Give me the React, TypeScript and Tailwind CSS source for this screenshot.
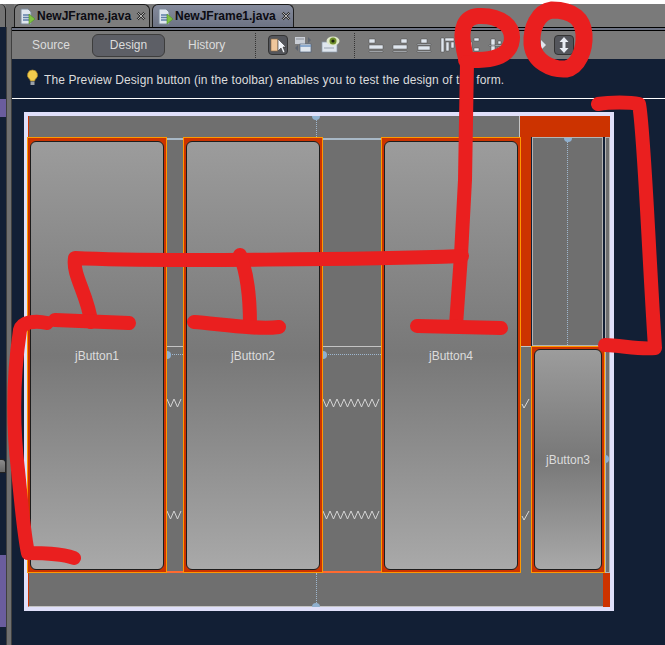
const font = "font-['Liberation_Sans',Arial,sans-serif]"

function FileIcon() {
  return (
    <svg width="17" height="17" viewBox="0 0 17 17" className="shrink-0">
      <path d="M2 1h7l3 3v12H2z" fill="#dfe6ee" stroke="#7c8a9a" />
      <path d="M4 7h6M4 9.5h6M4 12h6" stroke="#5f7fa8" strokeWidth="1.4" />
      <path d="M10 6l6 5-6 5z" fill="#7fc241" stroke="#4f8f26" strokeWidth="0.6" />
    </svg>
  )
}

function CloseIcon() {
  return (
    <svg width="10" height="10" viewBox="0 0 10 10" className="shrink-0">
      <path d="M1.5 1.5l7 7M8.5 1.5l-7 7" stroke="#2b2b2b" strokeWidth="2.4" />
      <path d="M1.5 1.5l7 7M8.5 1.5l-7 7" stroke="#b5b5b5" strokeWidth="1" />
    </svg>
  )
}

function Tab({ name, active }: { name: string; active?: boolean }) {
  return (
    <div
      className={`flex h-[23px] items-center gap-px rounded-t-md border border-b-0 border-[#1c1c1c] pl-[4px] pr-[3px] ${
        active ? "w-[142px] bg-gradient-to-b from-[#858b9c] to-[#6d7384]" : "w-[136px] bg-[#7d7d7d]"
      }`}
    >
      <FileIcon />
      <span className="text-[12px] font-bold text-[#0b0b12]">{name}</span>
      <span className="ml-[4px]"><CloseIcon /></span>
    </div>
  )
}

function Dotted() {
  return <div className="mx-0 h-[25px] border-l border-dotted border-[#333]" />
}

function AlignIcon({ d }: { d: string }) {
  return (
    <svg width="16" height="16" viewBox="0 0 16 16" className="shrink-0">
      <path d={d} fill="#dfe6ee" stroke="#4c4c4c" strokeWidth="0.5" />
    </svg>
  )
}

function Toolbar() {
  return (
    <div className="flex h-[28px] items-center bg-[#7a7a7a] text-[12px] text-[#dcdcdc]">
      <span className="ml-[20px] w-[60px]">Source</span>
      <div className="flex h-[23px] w-[73px] items-center justify-center rounded-md border border-[#3d3d3d] bg-[#5d5f66]">Design</div>
      <span className="ml-[23px] w-[67px]">History</span>
      <Dotted />
      <div className="ml-[12px] flex h-[20px] w-[20px] items-center justify-center rounded-[4px] border border-[#333] bg-[#54565c]">
        <svg width="16" height="17" viewBox="0 0 16 17">
          <rect x="1" y="2" width="7" height="12" fill="#efc79c" stroke="#8a6a44" strokeWidth="0.6" />
          <path d="M8 2l0 12 3-3 2 5 2-1-2-5h3z" fill="#f2f5fa" stroke="#333" strokeWidth="0.6" />
        </svg>
      </div>
      <svg width="18" height="18" viewBox="0 0 18 18" className="ml-[6px]">
        <rect x="1" y="1" width="10" height="7" fill="#c9ced6" />
        <path d="M2 3h8" stroke="#8a8f98" />
        <rect x="6" y="8" width="11" height="8" fill="#dfe6ee" stroke="#50637c" strokeWidth="0.7" />
        <path d="M6 10h11" stroke="#6f94c2" strokeWidth="1.5" />
        <path d="M1 12l3-3v6zM17 4l-3-3v6z" fill="#5d6470" />
      </svg>
      <svg width="20" height="18" viewBox="0 0 20 18" className="ml-[9px]">
        <rect x="1" y="6" width="15" height="10" fill="#dfe6ee" stroke="#8a98a8" strokeWidth="0.7" />
        <path d="M3 12h10" stroke="#9aa5b2" />
        <ellipse cx="12" cy="5" rx="6.5" ry="4.5" fill="#dfe8c8" />
        <circle cx="12" cy="5" r="3.5" fill="#6f8f2a" />
        <circle cx="12" cy="5" r="1.6" fill="#1d2410" />
      </svg>
      <div className="ml-[13px]"><Dotted /></div>
      <div className="ml-[13px] flex items-center gap-[8px]">
        <AlignIcon d="M1 2h6v4H1zM1 8h14v4H1zM1 14h14v1H1z" />
        <AlignIcon d="M9 2h6v4H9zM1 8h14v4H1zM1 14h14v1H1z" />
        <AlignIcon d="M5 2h6v4H5zM1 7h14v1H1zM2 9h12v4H2zM1 14h14v1H1z" />
        <AlignIcon d="M1 1h3v14H1zM5 1h9v3H5zM6 5h3v9H6zM11 5h3v6h-3z" />
        <AlignIcon d="M10 1h5v3h-5zM10 11h5v3h-5zM2 5h6v6H2z" />
        <AlignIcon d="M1 8h14v1H1zM3 2h4v13H3zM10 4h3v3h-3zM10 10h3v3h-3z" />
      </div>
      <div className="ml-[37px] h-0 w-0 border-y-[5px] border-l-[5px] border-y-transparent border-l-[#dfe6ee]" />
      <div className="ml-[8px] flex h-[20px] w-[20px] items-center justify-center rounded-[4px] border border-[#333] bg-[#54565c]">
        <svg width="12" height="16" viewBox="0 0 12 16">
          <path d="M6 0l4.500 5H7.500v6h3L6 16l-4.500-5h3V5h-3z" fill="#e8edf4" />
        </svg>
      </div>
    </div>
  )
}

function JButton({ label, className }: { label: string; className: string }) {
  return (
    <div className={`border border-[#ff9900] bg-[#cc3300] p-[2px] ${className}`}>
      <div className="flex h-full w-full items-center justify-center rounded-[6px] border border-[#1d1d1d] bg-gradient-to-b from-[#9c9c9c] via-[#787878] to-[#a9a9a9] text-[12px] text-[#dcdcdc]">
        {label}
      </div>
    </div>
  )
}

function Zigzag({ count }: { count: number }) {
  const points = Array.from({ length: count * 2 + 1 }, (_, i) => `${i * 3.5},${i % 2 === 0 ? 1 : 9}`).join(" ")
  return (
    <svg height="10" className="w-full shrink-0 overflow-hidden">
      <polyline points={points} fill="none" stroke="#d4d4d4" strokeWidth="1" />
    </svg>
  )
}

function Check() {
  return (
    <svg width="9" height="10" viewBox="0 0 9 10" className="shrink-0">
      <path d="M1 5l2 4 5-9" fill="none" stroke="#d8d8d8" />
    </svg>
  )
}

function Gap({ width, zigs }: { width: string; zigs: number }) {
  return (
    <div className={`relative flex shrink-0 flex-col ${width} bg-[#6f6f6f]`}>
      <div className="mt-px h-[2px] shrink-0 bg-[#a8b8c6]" />
      <div className="h-[207px] shrink-0 border-b border-[#c4c4c4]" />
      <div className="mt-[7px] shrink-0 border-t border-dotted border-[#9fb8d0]" />
      <div className="absolute left-0 top-[214px] h-[8px] w-[4px] rounded-r-full bg-[#8fb0cf]" />
      <div className="mt-[43px]"><Zigzag count={zigs} /></div>
      <div className="mt-[102px]"><Zigzag count={zigs} /></div>
      <div className="mt-auto h-[2px] shrink-0 bg-[#ff6a30]" />
    </div>
  )
}

function Form() {
  return (
    <div className="ml-[12px] mt-[13px] h-[499px] w-[590px] border-4 border-[#e0e0fa]">
      <div className="relative flex h-[21px]">
        <div className="flex-1 border-l border-[#cc3300] bg-[#6f6f6f]" />
        <div className="w-[91px] border-l border-[#c4c4c4] bg-[#cc3300]" />
        <div className="absolute left-[288px] top-0 h-full border-l border-dotted border-[#9fb8d0]" />
        <div className="absolute left-[284px] top-0 h-[4px] w-[8px] rounded-b-full bg-[#8fb0cf]" />
      </div>

      <div className="relative -ml-px flex h-[436px]">
        <JButton label="jButton1" className="h-full w-[140px] shrink-0 pt-[3px]" />
        <Gap width="w-[16px]" zigs={2} />
        <JButton label="jButton2" className="h-full w-[140px] shrink-0 pt-[3px]" />
        <Gap width="w-[58px]" zigs={8} />
        <JButton label="jButton4" className="h-full w-[140px] shrink-0 pt-[3px]" />
        <div className="flex w-[10px] shrink-0 flex-col">
          <div className="h-[210px] shrink-0 border-b border-[#c4c4c4] bg-[#cc3300]" />
          <div className="flex flex-1 flex-col items-center bg-[#6f6f6f]">
            <div className="mt-[52px] -translate-x-px"><Check /></div>
            <div className="mt-[102px] -translate-x-px"><Check /></div>
          </div>
        </div>
        <div className="flex w-[74px] shrink-0 flex-col">
          <div className="relative ml-px mr-[2px] flex h-[209px] shrink-0 justify-center border border-[#b4b4b4] bg-[#6f6f6f]">
            <div className="h-full border-l border-dotted border-[#9fb8d0]" />
            <div className="absolute left-[31px] top-0 h-[4px] w-[8px] rounded-b-full bg-[#8fb0cf]" />
          </div>
          <JButton label="jButton3" className="min-h-0 flex-1" />
        </div>
        <div className="relative w-[5px] shrink-0 border border-[#b4b4b4] bg-[#6f6f6f]">
          <div className="absolute -left-px top-[317px] h-[8px] w-[4px] rounded-r-full bg-[#8fb0cf]" />
        </div>
      </div>

      <div className="relative flex h-[34px]">
        <div className="flex-1 border-b border-l border-b-[#c4c4c4] border-l-[#cc3300] bg-[#6f6f6f]" />
        <div className="w-[7px] bg-[#cc3300]" />
        <div className="absolute left-[288px] top-0 h-full border-l border-dotted border-[#9fb8d0]" />
        <div className="absolute bottom-0 left-[284px] h-[4px] w-[8px] rounded-t-full bg-[#8fb0cf]" />
      </div>
    </div>
  )
}

function LeftStrip() {
  return (
    <div className="flex w-[12px] shrink-0">
      <div className="flex w-[6px] flex-col">
        <div className="h-[72px]" />
        <div className="h-[18px] bg-[#6a5d9e]" />
        <div className="h-[342px]" />
        <div className="h-[14px] rounded-tr-sm border-y border-r border-[#222] bg-gradient-to-b from-[#8c8c8c] to-[#666]" />
        <div className="h-[82px]" />
        <div className="h-[72px] bg-[#6a5d9e]" />
      </div>
      <div className="w-[6px] border-x border-[#3f3f3f] bg-[#6f6f6f]" />
    </div>
  )
}

function Scribbles() {
  return (
    <svg width="665" height="645" className="pointer-events-none absolute left-0 top-0" fill="none" stroke="#ea1f1f" strokeWidth="14" strokeLinecap="round" strokeLinejoin="round">
      <path strokeWidth="16" d="M466 60C478 60 505 62 511 44C516 26 500 15 478 16C464 17 461 30 463 42C464 52 466 58 467 62" />
      <path d="M467 62L465 180L461 255L456 325" />
      <path strokeWidth="17" d="M552 10C538 12 531 28 532 44C534 62 552 70 566 69C578 67 585 50 584 34C583 20 574 10 552 10Z" />
      <path d="M462 256C380 259 150 262 75 258C72 275 88 295 91 322" />
      <path d="M240 255C248 275 250 300 250 325" />
      <path d="M55 320L129 323M194 322C220 324 255 330 279 327M417 326L501 328" />
      <path d="M47 323C35 320 22 322 20 330C14 370 12 420 18 470C22 510 24 535 28 553C42 553 60 553 74 558" />
      <path d="M598 104C610 102 630 102 639 104C644 130 648 240 655 348C640 350 620 345 605 345" />
    </svg>
  )
}

export default function App() {
  return (
    <div className={`relative flex h-[645px] w-[665px] flex-col overflow-hidden bg-[#121f35] ${font}`}>
      <div className="h-[4px] shrink-0 bg-white" />
      <div className="flex h-[23px] shrink-0 items-end bg-[#7a7a7a]">
        <div className="h-[23px] w-[6px] rounded-tr-md border-r border-[#1c1c1c] bg-[#747474]" />
        <div className="h-[23px] w-[8px] bg-[#6f6f6f]" />
        <Tab name="NewJFrame.java" />
        <div className="w-[2px]" />
        <Tab name="NewJFrame1.java" active />
      </div>
      <div className="flex min-h-0 flex-1">
        <LeftStrip />
        <div className="min-w-0 flex-1">
          <div className="h-[4px] border-y border-black bg-[#6d7384]" />
          <Toolbar />
          <div className="flex h-[40px] items-center border-b border-white pl-[13px] pt-[2px] text-[12px] tracking-[0.1px] text-[#dcdcdc]">
            <svg width="15" height="17" viewBox="0 0 15 17" className="mr-[4px] mt-[-4px] shrink-0">
              <path d="M7.500 1a5 5 0 0 0-3 9c.6.6.8 1.200.8 2h4.400c0-.8.2-1.400.8-2a5 5 0 0 0-3-9z" fill="#f3cc4c" stroke="#a8852a" strokeWidth="0.7" />
              <rect x="5.500" y="12.500" width="4" height="3.500" fill="#9aa0a8" />
            </svg>
            <span>The Preview Design button (in the toolbar) enables you to test the design of the form.</span>
          </div>
          <Form />
        </div>
      </div>
      <Scribbles />
    </div>
  )
}
